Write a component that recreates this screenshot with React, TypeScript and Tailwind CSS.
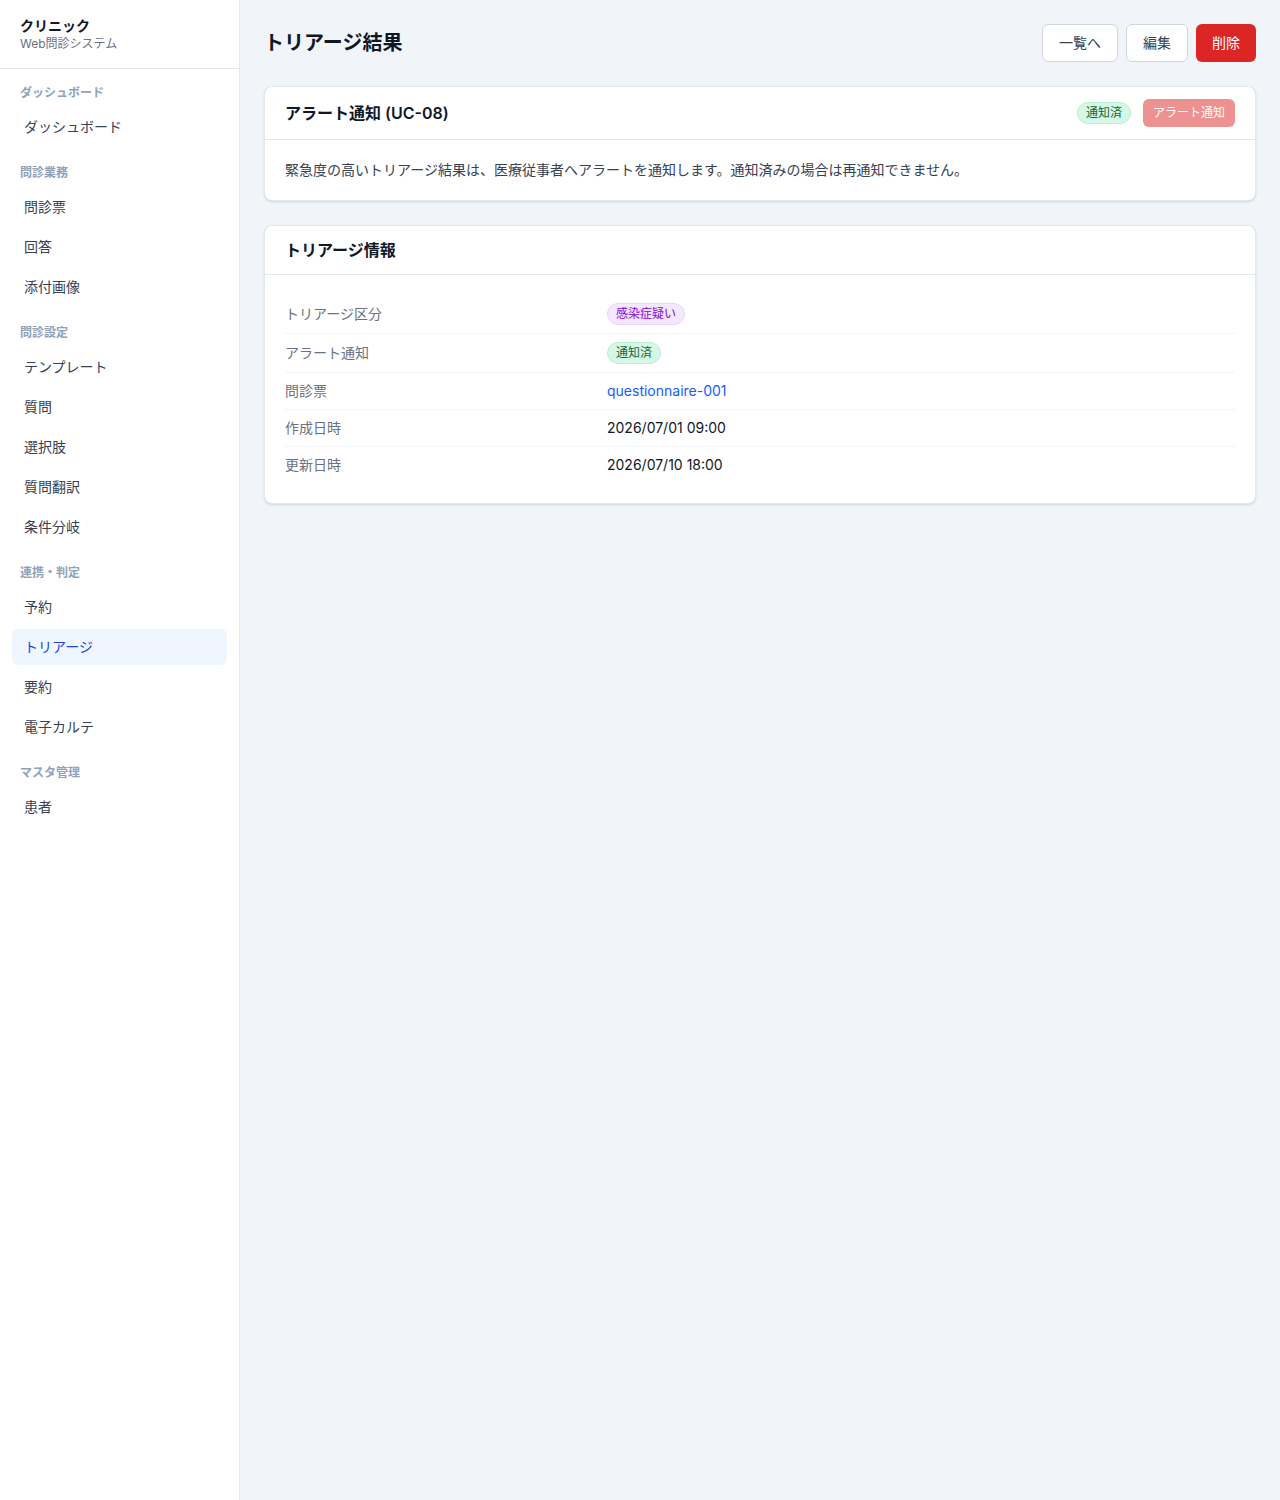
import React from 'react'

const navSections = [
  { label: 'ダッシュボード', items: ['ダッシュボード'] },
  { label: '問診業務', items: ['問診票', '回答', '添付画像'] },
  { label: '問診設定', items: ['テンプレート', '質問', '選択肢', '質問翻訳', '条件分岐'] },
  { label: '連携・判定', items: ['予約', 'トリアージ', '要約', '電子カルテ'] },
  { label: 'マスタ管理', items: ['患者'] },
]

function Sidebar() {
  return (
    <aside className="w-[240px] shrink-0 bg-white border-r border-gray-200">
      <div className="px-5 py-4 border-b border-gray-200">
        <div className="text-sm font-bold text-gray-900 leading-5">クリニック</div>
        <div className="text-xs text-gray-500 leading-4">Web問診システム</div>
      </div>
      <nav className="px-3 pt-4">
        {navSections.map((section, i) => (
          <div key={section.label} className={i > 0 ? 'mt-5' : ''}>
            <div className="px-2 mb-2 text-xs font-semibold text-slate-400 leading-4">
              {section.label}
            </div>
            <div className="space-y-1">
              {section.items.map((item) => {
                const active = item === 'トリアージ'
                return (
                  <div
                    key={item}
                    className={
                      active
                        ? 'h-9 flex items-center px-3 rounded-md bg-blue-50 text-sm text-blue-700'
                        : 'h-9 flex items-center px-3 rounded-md text-sm text-gray-700'
                    }
                  >
                    {item}
                  </div>
                )
              })}
            </div>
          </div>
        ))}
      </nav>
    </aside>
  )
}

const rows: { label: string; value: React.ReactNode }[] = [
  {
    label: 'トリアージ区分',
    value: (
      <span className="inline-flex items-center rounded-full border border-purple-200 bg-purple-100 px-2 py-0.5 text-xs leading-4 text-purple-700">
        感染症疑い
      </span>
    ),
  },
  {
    label: 'アラート通知',
    value: (
      <span className="inline-flex items-center rounded-full border border-[#bbf0d3] bg-[#d5f7e5] px-2 py-0.5 text-xs leading-4 text-[#166534]">
        通知済
      </span>
    ),
  },
  { label: '問診票', value: <span className="text-blue-600">questionnaire-001</span> },
  { label: '作成日時', value: <span className="text-gray-900">2026/07/01 09:00</span> },
  { label: '更新日時', value: <span className="text-gray-900">2026/07/10 18:00</span> },
]

export default function App() {
  return (
    <div
      className="flex min-h-screen bg-slate-100"
      style={{ fontFamily: 'Inter, "Noto Sans CJK JP", sans-serif' }}
    >
      <Sidebar />
      <main className="flex-1 px-6 pt-6">
        <div className="flex items-center justify-between mb-6">
          <h1 className="text-xl font-bold text-gray-900">トリアージ結果</h1>
          <div className="flex items-center gap-2">
            <button className="h-[38px] px-4 rounded-md border border-gray-300 bg-white text-sm text-gray-700">
              一覧へ
            </button>
            <button className="h-[38px] px-4 rounded-md border border-gray-300 bg-white text-sm text-gray-700">
              編集
            </button>
            <button className="h-[38px] px-4 rounded-md bg-[#dc2626] text-sm text-white">削除</button>
          </div>
        </div>

        {/* アラート通知 */}
        <div className="bg-white rounded-lg border border-gray-200 shadow-sm mb-6">
          <div className="flex items-center justify-between px-5 py-3 border-b border-gray-200">
            <h2 className="text-base font-semibold text-gray-900">アラート通知 (UC-08)</h2>
            <div className="flex items-center gap-3">
              <span className="inline-flex items-center rounded-full border border-[#bbf0d3] bg-[#d5f7e5] px-2 py-0.5 text-xs leading-4 text-[#166534]">
                通知済
              </span>
              <button disabled className="h-7 px-2.5 rounded-md bg-[#dc2626] opacity-50 text-xs text-white">
                アラート通知
              </button>
            </div>
          </div>
          <div className="px-5 py-5 text-sm text-gray-700">
            緊急度の高いトリアージ結果は、医療従事者へアラートを通知します。通知済みの場合は再通知できません。
          </div>
        </div>

        {/* トリアージ情報 */}
        <div className="bg-white rounded-lg border border-gray-200 shadow-sm">
          <div className="px-5 py-3 border-b border-gray-200">
            <h2 className="text-base font-bold text-gray-900">トリアージ情報</h2>
          </div>
          <div className="p-5">
            {rows.map((row, i) => (
              <div
                key={row.label}
                className={
                  i < rows.length - 1
                    ? 'grid grid-cols-3 gap-4 py-2 border-b border-gray-100 text-sm items-center'
                    : 'grid grid-cols-3 gap-4 py-2 text-sm items-center'
                }
              >
                <div className="text-gray-500">{row.label}</div>
                <div className="col-span-2">{row.value}</div>
              </div>
            ))}
          </div>
        </div>
      </main>
    </div>
  )
}
